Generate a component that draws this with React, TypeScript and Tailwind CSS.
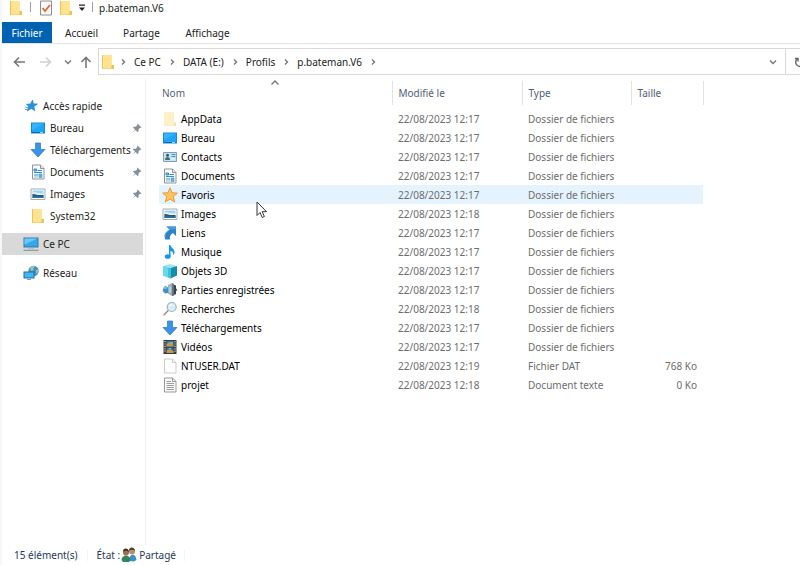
import type { ReactNode } from "react";

type IconName =
  | "folder"
  | "folderPale"
  | "desktop"
  | "contacts"
  | "documents"
  | "star"
  | "pictures"
  | "links"
  | "music"
  | "cube"
  | "games"
  | "search"
  | "download"
  | "video"
  | "file"
  | "text"
  | "quick"
  | "pc"
  | "network";

interface Entry {
  name: string;
  icon: IconName;
  modified: string;
  type: string;
  size?: string;
}

const FOLDER_TYPE = "Dossier de fichiers";

const ENTRIES: Entry[] = [
  { name: "AppData", icon: "folderPale", modified: "22/08/2023 12:17", type: FOLDER_TYPE },
  { name: "Bureau", icon: "desktop", modified: "22/08/2023 12:17", type: FOLDER_TYPE },
  { name: "Contacts", icon: "contacts", modified: "22/08/2023 12:17", type: FOLDER_TYPE },
  { name: "Documents", icon: "documents", modified: "22/08/2023 12:17", type: FOLDER_TYPE },
  { name: "Favoris", icon: "star", modified: "22/08/2023 12:17", type: FOLDER_TYPE },
  { name: "Images", icon: "pictures", modified: "22/08/2023 12:18", type: FOLDER_TYPE },
  { name: "Liens", icon: "links", modified: "22/08/2023 12:17", type: FOLDER_TYPE },
  { name: "Musique", icon: "music", modified: "22/08/2023 12:17", type: FOLDER_TYPE },
  { name: "Objets 3D", icon: "cube", modified: "22/08/2023 12:17", type: FOLDER_TYPE },
  { name: "Parties enregistrées", icon: "games", modified: "22/08/2023 12:17", type: FOLDER_TYPE },
  { name: "Recherches", icon: "search", modified: "22/08/2023 12:18", type: FOLDER_TYPE },
  { name: "Téléchargements", icon: "download", modified: "22/08/2023 12:17", type: FOLDER_TYPE },
  { name: "Vidéos", icon: "video", modified: "22/08/2023 12:17", type: FOLDER_TYPE },
  { name: "NTUSER.DAT", icon: "file", modified: "22/08/2023 12:19", type: "Fichier DAT", size: "768 Ko" },
  { name: "projet", icon: "text", modified: "22/08/2023 12:18", type: "Document texte", size: "0 Ko" },
];

const QUICK_ACCESS: { name: string; icon: IconName; pinned: boolean }[] = [
  { name: "Bureau", icon: "desktop", pinned: true },
  { name: "Téléchargements", icon: "download", pinned: true },
  { name: "Documents", icon: "documents", pinned: true },
  { name: "Images", icon: "pictures", pinned: true },
  { name: "System32", icon: "folder", pinned: false },
];

const CRUMBS = ["Ce PC", "DATA (E:)", "Profils", "p.bateman.V6"];

const DRAWINGS: Record<IconName, ReactNode> = {
  folder: (
    <>
      <path d="M2 1h9.500v10.500H14V15H2z" fill="#f7d673" />
      <path d="M2 1h9.500v13H2z" fill="#ffe391" />
      <path d="M2 1h1v14H2zM11.500 11H14v4h-2.500z" fill="#efc252" />
    </>
  ),
  folderPale: (
    <>
      <path d="M2 1h10v10.500h2V15H2z" fill="#f9ebbd" />
      <path d="M2 1h10v13H2z" fill="#fdf1c8" />
      <path d="M12 11.500h2V15h-2z" fill="#f5e3ab" />
    </>
  ),
  desktop: (
    <>
      <path d="M1 2.500h14v11H1z" fill="#1688dc" />
      <path d="M2 3.500h12v8.500H2z" fill="#1fa4f7" />
      <path d="M2 3.500h12L2 10z" fill="#37b2fb" />
      <path d="M2 12h12v1H2z" fill="#0b69b3" />
      <path d="M10 12h3v1h-3z" fill="#9bd6f8" />
    </>
  ),
  contacts: (
    <>
      <path d="M1.500 3.500h13v9h-13z" fill="#c7e2f3" stroke="#7ba0bb" />
      <circle cx="5.500" cy="6.200" r="1.500" fill="#48574c" />
      <path d="M3 11c0-4 5-4 5 0z" fill="#2f7666" />
      <path d="M9.500 5.500h4M9.500 7.500h4" stroke="#3a94cf" />
      <path d="M9.500 10h3" stroke="#fff" />
    </>
  ),
  documents: (
    <>
      <path d="M2.500 1h8L14 4.500V15H2.500z" fill="#fafcfd" stroke="#8a969d" />
      <path d="M10.500 1v3.500H14" fill="#dce5ea" stroke="#8a969d" />
      <path d="M4 5h2.500v2H4zM7.500 6.500H12M4 8.500h8M4 11h4" stroke="#2b91d0" fill="#8ac7eb" />
      <path d="M9 10h3v3.500H9zM4 13h4" fill="#5fb3e3" stroke="#679bb8" strokeWidth=".7" />
    </>
  ),
  star: (
    <path
      d="M8 .8l2.100 4.900 5.300.4-4.100 3.500 1.400 5.400L8 12.100 3.300 15l1.400-5.400L.6 6.100l5.300-.4z"
      fill="#ffc45b"
      stroke="#e28c29"
      strokeWidth=".8"
      strokeLinejoin="round"
    />
  ),
  pictures: (
    <>
      <path d="M1 3h14v10.500H1z" fill="#fff" stroke="#9aa4aa" strokeWidth=".9" />
      <path d="M2.500 4.500h11V12h-11z" fill="#9bd3f2" />
      <path d="M2.500 6.500c3-1 5 1 11 1V9h-11z" fill="#e1f2f9" />
      <path d="M2.500 8c3 0 4 1.500 11 1v3h-11z" fill="#34545a" />
      <path d="M2.500 10.500c4-1 7 .5 11 0V12h-11z" fill="#2572b5" />
    </>
  ),
  links: (
    <>
      <path d="M4.500 1.500H14V11l-3-3c-3 1.500-3.500 4-3 6.500H3.500C1.500 11 3 7 7.500 4.800z" fill="#2b83c9" />
      <path d="M4.500 1.500H14V4L8 4.800z" fill="#4a9cdb" />
      <path d="M3 12c-.5-3 1.500-5.500 4.500-7" fill="none" stroke="#6db5e6" />
    </>
  ),
  music: (
    <>
      <path d="M7 1h1.500c.2 3 4.500 3.500 4 8-.2 1-1 2-1.500 2.500.8-3-.5-4-2.500-4.500v5.500H7z" fill="#1598ec" />
      <ellipse cx="5.700" cy="12.500" rx="2.900" ry="2.300" fill="#1598ec" />
    </>
  ),
  cube: (
    <>
      <path d="M1 3l7-2 7 2-6 2z" fill="#9be7f1" />
      <path d="M1 3l7.500 2v10.500L1 12.500z" fill="#36c5dc" />
      <path d="M8.500 5L15 3v9.500l-6.500 3z" fill="#128daa" />
      <path d="M1 3l5 1.300v10L1 12.500z" fill="#67d9e8" />
    </>
  ),
  games: (
    <>
      <path d="M6 3l4-2v13l-4-2.500z" fill="#9caeb9" />
      <path d="M10 2l4 1.500v3L15.500 8 14 9v3l-4 2z" fill="#36434d" />
      <path d="M10 1l2 1v12l-2-1z" fill="#617582" />
      <path d="M1 6.500L6 5v6l-3 .5L.8 9z" fill="#3d91c7" />
      <circle cx="3.500" cy="5.500" r="1.800" fill="#77bce2" />
      <path d="M8 4.500v6" stroke="#e5eff4" />
    </>
  ),
  search: (
    <>
      <path d="M6 9.800L2 13.800" stroke="#a3917f" strokeWidth="1.600" strokeLinecap="round" />
      <circle cx="9.700" cy="6" r="4.500" fill="#d6edfb" stroke="#9cb4c4" strokeWidth="1.200" />
      <path d="M7.300 5.500c.3-1.500 1.500-2 3-2" stroke="#fff" strokeWidth="1.300" fill="none" />
    </>
  ),
  download: (
    <path d="M5.500 1h5v6.500H15L8 15 1 7.500h4.500z" fill="#3b94e3" stroke="#2779c3" strokeWidth=".7" />
  ),
  video: (
    <>
      <path d="M1.500 1h13v14h-13z" fill="#393c40" />
      <path d="M4.500 2h7v5.500h-7z" fill="#3479b8" />
      <path d="M4.500 8.500h7V14h-7z" fill="#2869a9" />
      <path d="M4.500 5l3-2 4 3v1.500h-7zM5 11l3-1 3.500 2v2h-7z" fill="#c79a42" />
      <path d="M8 3h3v2H9zM6 9h3v2z" fill="#69b6d7" />
      <path d="M3 2v12M13 2v12" stroke="#c8cdd1" strokeWidth="1.200" strokeDasharray="1.200 1.200" />
    </>
  ),
  file: (
    <>
      <path d="M2.500 1h8L14 4.500V15H2.500z" fill="#fff" stroke="#cbcbcb" />
      <path d="M10.500 1v3.500H14" fill="#f3f3f3" stroke="#cbcbcb" />
    </>
  ),
  text: (
    <>
      <path d="M2.500 1h8L14 4.500V15H2.500z" fill="#fafafa" stroke="#999" />
      <path d="M10.500 1v3.500H14M4.500 4.500H9M4.500 6.500h7.500M4.500 8.500h7.500M4.500 10.500h7.500M4.500 12.500h7.500" fill="none" stroke="#929292" strokeWidth=".9" />
    </>
  ),
  quick: (
    <>
      <path d="M9.500 2l.9 3.700 4.100.3-3.500 2.400.8 4.400-3.500-2.300-4 2.500 1.300-4.500-2.200-2.300 4-.3z" fill="#2196e3" stroke="#1677bd" strokeWidth=".5" />
      <path d="M2.500 9.500H5M2 11.500h2.500" stroke="#48aee9" />
    </>
  ),
  pc: (
    <>
      <path d="M.5 1.500h15v10H.5z" fill="#3d7596" />
      <path d="M1.500 2.500h13v8h-13z" fill="#31a9ef" />
      <path d="M1.500 2.500h13l-13 6z" fill="#6cc8fa" />
      <path d="M5 12h6v1H5z" fill="#b6c4cc" />
      <path d="M.5 14.300h15" stroke="#7f9ba9" strokeWidth="1.200" />
    </>
  ),
  network: (
    <>
      <circle cx="10.500" cy="6" r="5.200" fill="#4b8fae" />
      <path d="M7 3c1-2 4-2.500 5-1.500l-2 2 1 1.500-3 1zM13 5l2-.5c.5 2-.5 4-2 4.500z" fill="#8cc3d3" />
      <path d="M.5 6.500h11v7H.5z" fill="#276c9e" />
      <path d="M1.500 7.500h9v5h-9z" fill="#3eb7f7" />
      <path d="M4 14h4v1H4z" fill="#7ea0b3" />
    </>
  ),
};

function Icon({ name }: { name: IconName }) {
  return (
    <svg viewBox="0 0 16 16" className="size-4 shrink-0" aria-hidden="true">
      {DRAWINGS[name]}
    </svg>
  );
}

function Pin() {
  return (
    <svg viewBox="0 0 10 10" className="size-2.5 shrink-0" aria-hidden="true">
      <path d="M5.500.5l4 4-1 .5L8 4.800 6.500 6.500v2L5.500 9 3.500 7 .5 9.500 3 6.500 1 4.500l.7-.8h2L5.400 2 5 1z" fill="#84919b" />
    </svg>
  );
}

function Chevron({ dir = "right" }: { dir?: "right" | "down" | "up" }) {
  const d = { right: "M3 1.500L5.500 4 3 6.500", down: "M1 2.500L4 5.500l3-3", up: "M.5 5.500L4 2l3.500 3.500" }[dir];
  return (
    <svg viewBox="0 0 8 8" className="size-2 shrink-0" fill="none" stroke="#777" strokeWidth="1.400" aria-hidden="true">
      <path d={d} />
    </svg>
  );
}

function Arrow({ d, color }: { d: string; color: string }) {
  return (
    <svg viewBox="0 0 12 12" className="size-3 shrink-0" fill="none" stroke={color} strokeWidth="1.600" aria-hidden="true">
      <path d={d} />
    </svg>
  );
}

function TitleBar() {
  return (
    <header className="flex h-[22px] items-start pl-1.5">
      <Icon name="folder" />
      <span className="mt-0.5 ml-1.5 h-2.5 w-px bg-gray-400" />
      <button aria-label="Propriétés" className="ml-[7px]">
        <svg viewBox="0 0 16 16" className="size-4" aria-hidden="true">
          <path d="M2.500 1h11v14h-11z" fill="#f8f8f8" stroke="#8d8d8d" />
          <path d="M4.500 8l2.500 3 5-6" fill="none" stroke="#e3683d" strokeWidth="1.800" />
        </svg>
      </button>
      <button aria-label="Nouveau dossier" className="ml-1">
        <Icon name="folder" />
      </button>
      <button aria-label="Personnaliser la barre" className="mt-1 ml-1">
        <svg viewBox="0 0 8 8" className="size-2" aria-hidden="true">
          <path d="M1 .5h6v1.200H1zM1 3.500h6L4 7z" fill="#222" />
        </svg>
      </button>
      <span className="mt-0.5 ml-1.5 h-2.5 w-px bg-gray-400" />
      <h1 className="ml-1.5 leading-4">p.bateman.V6</h1>
    </header>
  );
}

function Ribbon() {
  return (
    <nav className="flex h-[22px] border-b border-[#e3e3e3]">
      <button className="w-[50px] bg-[#0063b1] text-white">Fichier</button>
      <button className="w-[59px]">Accueil</button>
      <button className="w-[61px]">Partage</button>
      <button className="w-[71px]">Affichage</button>
    </nav>
  );
}

function AddressBar() {
  return (
    <div className="flex h-[35px] items-center overflow-hidden pt-1 pb-1">
      <div className="flex w-24 shrink-0 items-center pl-[11px]">
        <button aria-label="Précédent"><Arrow d="M12 6H1.500M6 1.500L1.500 6 6 10.500" color="#777" /></button>
        <button aria-label="Suivant" className="ml-[15px]"><Arrow d="M0 6h10.500M6 1.500L10.500 6 6 10.500" color="#d0d0d0" /></button>
        <button aria-label="Emplacements récents" className="ml-3"><Chevron dir="down" /></button>
        <button aria-label="Dossier parent" className="ml-2"><Arrow d="M6 12V1.500M1.500 6L6 1.500 10.500 6" color="#777" /></button>
      </div>
      <div className="flex h-[27px] min-w-0 flex-1 items-center border border-[#d9d9d9] pl-px">
        <Icon name="folder" />
        <span className="w-[3px]" />
        <Chevron />
        {CRUMBS.map((crumb) => (
          <div key={crumb} className="flex items-center">
            <button className="px-[7px]">{crumb}</button>
            <Chevron />
          </div>
        ))}
        <button aria-label="Historique" className="mr-2 ml-auto"><Chevron dir="down" /></button>
      </div>
      <button aria-label="Actualiser" className="-mr-2.5 flex h-[27px] w-6 shrink-0 items-center justify-end border-y border-[#d9d9d9] pr-1">
        <svg viewBox="0 0 12 12" className="size-3" fill="none" stroke="#666" strokeWidth="1.400" aria-hidden="true">
          <path d="M9.500 3A4.500 4.500 0 1 1 3.500 2.500M1 2.500h3v3" />
        </svg>
      </button>
    </div>
  );
}

function Sidebar() {
  return (
    <aside className="w-36 shrink-0 border-r border-[#f0f0f0] pt-4 pr-0.5">
      <button className="flex h-[22px] w-full items-center gap-1 pl-[21px]">
        <Icon name="quick" />
        <span className="whitespace-nowrap">Accès rapide</span>
      </button>
      {QUICK_ACCESS.map((item) => (
        <button key={item.name} className="flex h-[22px] w-full items-center pr-px pl-7 text-left">
          <Icon name={item.icon} />
          <span className="ml-1 min-w-0 flex-1 whitespace-nowrap">{item.name}</span>
          {item.pinned && <Pin />}
        </button>
      ))}
      <button className="mt-1.5 flex h-[22px] w-full items-center gap-1 bg-[#d9d9d9] pl-[21px]">
        <Icon name="pc" />
        Ce PC
      </button>
      <button className="mt-[7px] flex h-[22px] w-full items-center gap-1 pl-[21px]">
        <Icon name="network" />
        Réseau
      </button>
    </aside>
  );
}

function FileTable() {
  const separator = "border-r border-[#e2e2e2]";
  return (
    <main className="relative min-w-0 flex-1 pt-0.5 pl-[13px]">
      <table className="w-[544px] table-fixed border-collapse text-left">
        <colgroup>
          <col className="w-[233px]" />
          <col className="w-[130px]" />
          <col className="w-[109px]" />
          <col className="w-[72px]" />
        </colgroup>
        <thead>
          <tr className="h-6 text-[#50607a]">
            <th scope="col" className={`${separator} relative pl-[3px] font-normal`}>
              <button>Nom</button>
              <span className="absolute -top-0.5 left-28 flex"><Chevron dir="up" /></span>
            </th>
            <th scope="col" className={`${separator} pl-1.5 font-normal`}><button>Modifié le</button></th>
            <th scope="col" className={`${separator} pl-1.5 font-normal`}><button>Type</button></th>
            <th scope="col" className={`${separator} pl-1.5 font-normal`}><button>Taille</button></th>
          </tr>
        </thead>
        <tbody className="text-[#6d6d6d] before:block before:h-1 before:content-['']">
          {ENTRIES.map((entry) => (
            <tr key={entry.name} className={entry.name === "Favoris" ? "h-[19px] bg-[#e5f3ff]" : "h-[19px]"}>
              <td className="pl-[3px] text-black">
                <span className="flex items-center gap-[3px] whitespace-nowrap">
                  <Icon name={entry.icon} />
                  {entry.name}
                </span>
              </td>
              <td className="pl-1.5 whitespace-nowrap">{entry.modified}</td>
              <td className="pl-1.5 whitespace-nowrap">{entry.type}</td>
              <td className="pr-1.5 text-right whitespace-nowrap">{entry.size}</td>
            </tr>
          ))}
        </tbody>
      </table>
      {/* mouse pointer over the list */}
      <svg viewBox="0 0 12 18" className="absolute top-[122px] left-[110px] h-[18px] w-3" aria-hidden="true">
        <path d="M1 1v13.500l3-3 2.200 5 2.200-1-2.200-4.800h4.300z" fill="#fff" stroke="#333" />
      </svg>
    </main>
  );
}

function StatusBar() {
  return (
    <footer className="flex h-5 items-center pl-3 text-[#1e395b]">
      <span>15 élément(s)</span>
      <span className="ml-2.5 h-3 w-px bg-gray-100" />
      <span className="ml-2">État :</span>
      <svg viewBox="0 0 16 16" className="ml-px size-4" aria-hidden="true">
        <path d="M8 14c0-8 7-8 7.500-1L13 14.500z" fill="#3d91ca" />
        <circle cx="11" cy="4.500" r="3" fill="#b9906c" />
        <path d="M8 4c0-5 6-4 6 0-2-1-3-2-6 0z" fill="#493b30" />
        <path d="M.5 13C1 7 9 7 9.500 13L8 15H2z" fill="#368359" />
        <circle cx="5" cy="5.500" r="3" fill="#9b7050" />
        <path d="M2 5c0-5 6-4 6 0-2-1-3-2-6 0z" fill="#35302b" />
      </svg>
      <span className="ml-0.5">Partagé</span>
      <span className="ml-2 h-3 w-px bg-gray-100" />
    </footer>
  );
}

export default function App() {
  return (
    <div className="flex min-h-screen flex-col overflow-hidden border-l-2 border-[#f7f7f7] bg-white font-['Noto_Sans',sans-serif] text-[10px] leading-4 text-[#222]">
      <TitleBar />
      <Ribbon />
      <AddressBar />
      <div className="flex flex-1">
        <Sidebar />
        <FileTable />
      </div>
      <StatusBar />
    </div>
  );
}
